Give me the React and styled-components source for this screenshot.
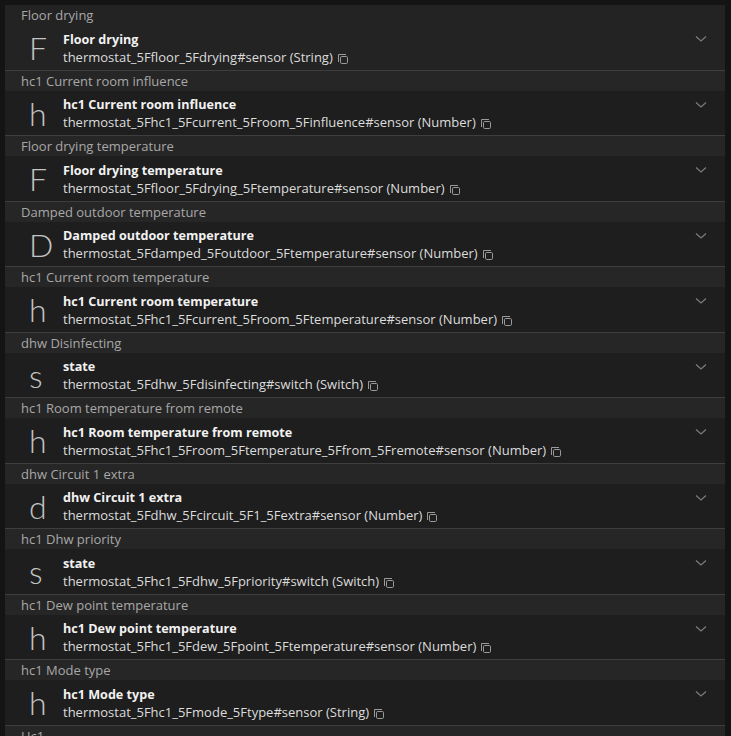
import React from "react";
import styled, { createGlobalStyle } from "styled-components";

const items = [
    { group: "Floor drying", title: "Floor drying", id: "thermostat_5Ffloor_5Fdrying#sensor (String)", active: true },
    { group: "hc1 Current room influence", title: "hc1 Current room influence", id: "thermostat_5Fhc1_5Fcurrent_5Froom_5Finfluence#sensor (Number)" },
    { group: "Floor drying temperature", title: "Floor drying temperature", id: "thermostat_5Ffloor_5Fdrying_5Ftemperature#sensor (Number)" },
    { group: "Damped outdoor temperature", title: "Damped outdoor temperature", id: "thermostat_5Fdamped_5Foutdoor_5Ftemperature#sensor (Number)" },
    { group: "hc1 Current room temperature", title: "hc1 Current room temperature", id: "thermostat_5Fhc1_5Fcurrent_5Froom_5Ftemperature#sensor (Number)" },
    { group: "dhw Disinfecting", title: "state", id: "thermostat_5Fdhw_5Fdisinfecting#switch (Switch)" },
    { group: "hc1 Room temperature from remote", title: "hc1 Room temperature from remote", id: "thermostat_5Fhc1_5Froom_5Ftemperature_5Ffrom_5Fremote#sensor (Number)" },
    { group: "dhw Circuit 1 extra", title: "dhw Circuit 1 extra", id: "thermostat_5Fdhw_5Fcircuit_5F1_5Fextra#sensor (Number)" },
    { group: "hc1 Dhw priority", title: "state", id: "thermostat_5Fhc1_5Fdhw_5Fpriority#switch (Switch)" },
    { group: "hc1 Dew point temperature", title: "hc1 Dew point temperature", id: "thermostat_5Fhc1_5Fdew_5Fpoint_5Ftemperature#sensor (Number)" },
    { group: "hc1 Mode type", title: "hc1 Mode type", id: "thermostat_5Fhc1_5Fmode_5Ftype#sensor (String)" },
    { group: "Hc1", title: "Hc1", id: "thermostat_5Fhc1#sensor (String)" },
];

export default function App() {
    return (
        <>
            <GlobalStyle/>
            <Page>
                <Panel>
                    {items.map((it, i) => (
                        <Section key={i} $active={it.active}>
                            <GroupLabel>{it.group}</GroupLabel>
                            <Row>
                                <Avatar>{it.title.charAt(0)}</Avatar>
                                <Content>
                                    <Title>{it.title}</Title>
                                    <Sub>
                                        {it.id}
                                        <CopyIcon/>
                                    </Sub>
                                </Content>
                                <Chevron/>
                            </Row>
                        </Section>
                    ))}
                </Panel>
            </Page>
        </>
    );
}

function CopyIcon() {
    return (
        <CopySvg width="12" height="12" viewBox="0 0 12 12">
            <path d="M1.5 9 V1.5 H9" fill="none" stroke="currentColor" strokeWidth="1"/>
            <rect x="3.5" y="3.5" width="7" height="7" rx="1.2" fill="none" stroke="currentColor" strokeWidth="1"/>
        </CopySvg>
    );
}

function Chevron() {
    return (
        <ChevronSvg width="12" height="8" viewBox="0 0 12 8">
            <path d="M1 1.5 L6 6 L11 1.5" fill="none" stroke="currentColor" strokeWidth="1.3"/>
        </ChevronSvg>
    );
}

/* ====== STYLES ====== */

const GlobalStyle = createGlobalStyle`
    html, body {
        margin: 0;
        background: #141414;
        font-family: "Open Sans", "Noto Sans", sans-serif;
        overflow: hidden;
    }
`;

const Page = styled.div`
    height: 736px;
    padding: 5px 6px 0 5px;
    box-sizing: border-box;
    overflow: hidden;
`;

const Panel = styled.div`
    display: flex;
    flex-direction: column;
`;

const Section = styled.div`
    display: flex;
    flex-direction: column;
    background: ${({$active}) => ($active ? "#232323" : "#262626")};

    & > div:last-child {
        background: ${({$active}) => ($active ? "#232323" : "#1e1e1e")};
    }
`;

const GroupLabel = styled.div`
    height: 20px;
    display: flex;
    align-items: center;
    padding-left: 16px;
    font-size: 13px;
    color: #a8a8a8;
    white-space: nowrap;
`;

const Row = styled.div`
    height: 44.5px;
    display: flex;
    align-items: center;
    border-bottom: 1px solid #3e3e3e;
    position: relative;
`;

/* lettre initiale, fine et grande */
const Avatar = styled.div`
    width: 42px;
    padding-left: 24px;
    box-sizing: border-box;
    font-family: "Lato", "Open Sans", sans-serif;
    font-size: 32px;
    font-weight: 300;
    color: #c4c4c4;
    line-height: 1;
    margin-top: 2px;
    flex-shrink: 0;
`;

const Content = styled.div`
    flex: 1;
    display: flex;
    flex-direction: column;
    gap: 1px;
    padding-left: 16px;
    margin-top: 2px;
`;

const Title = styled.div`
    font-size: 12.6px;
    font-weight: 700;
    color: #f2f2f2;
    line-height: 17px;
    white-space: nowrap;
`;

const Sub = styled.div`
    font-size: 13px;
    color: #dcdcdc;
    line-height: 17px;
    white-space: nowrap;
    display: flex;
    align-items: center;
`;

const CopySvg = styled.svg`
    color: #9a9a9a;
    margin-left: 4px;
    margin-top: 3px;
`;

const ChevronSvg = styled.svg`
    color: #7a7a7a;
    position: absolute;
    right: 18px;
    top: 10px;
`;
